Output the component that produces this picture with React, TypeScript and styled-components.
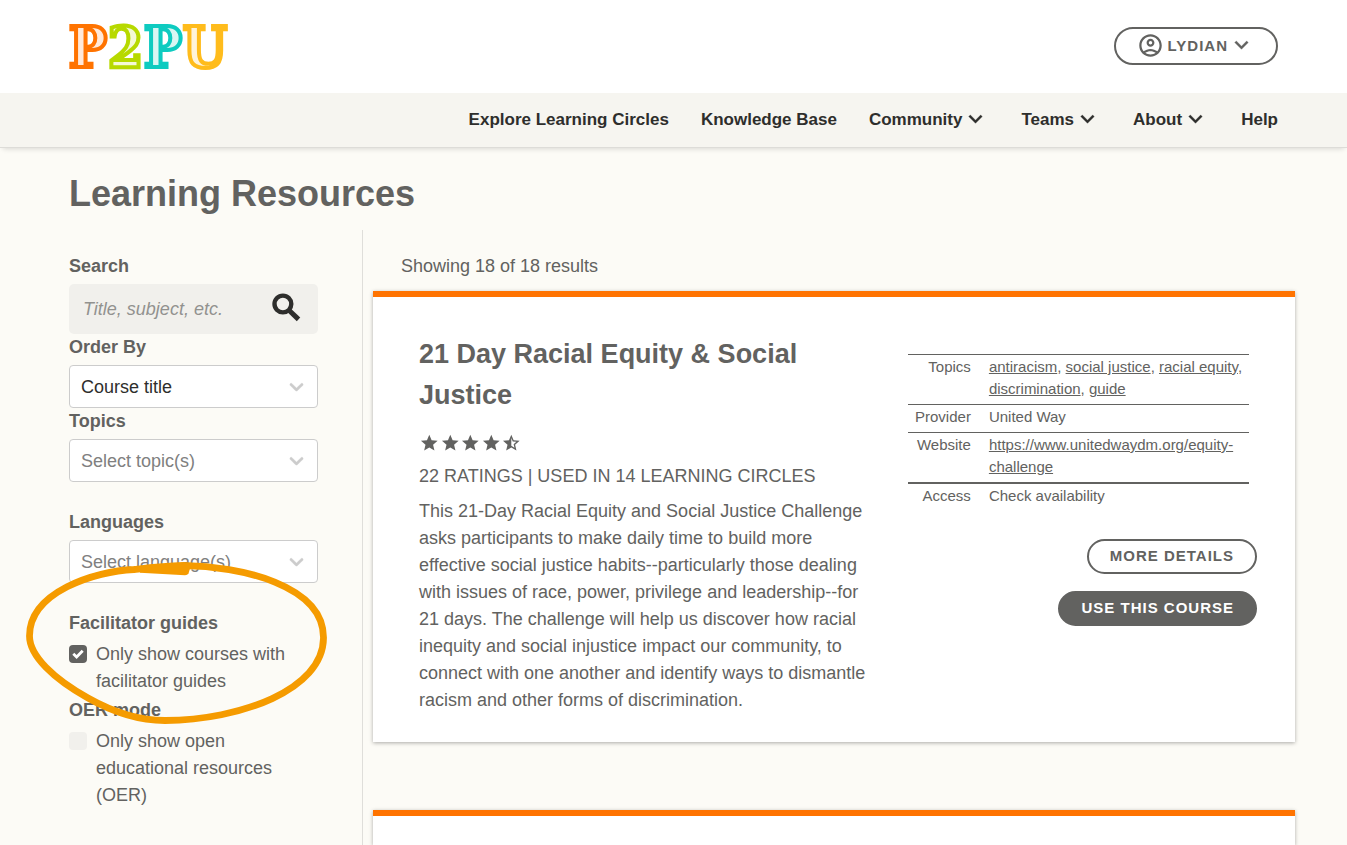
import React from 'react';
import styled, { createGlobalStyle } from 'styled-components';

const GlobalStyle = createGlobalStyle`
  *, *::before, *::after { box-sizing: border-box; }
  body {
    margin: 0;
    background: #fcfbf6;
    color: #626260;
    font-family: 'Liberation Sans', Arial, sans-serif;
    font-size: 18px;
    line-height: 27px;
  }
  button, input, select { font: inherit; color: inherit; }
`;

const Page = styled.div`
  display: flex;
  flex-direction: column;
  min-height: 100vh;
`;

const Header = styled.header`
  display: flex;
  justify-content: space-between;
  align-items: center;
  padding: 19px 69px 20px;
  background: #fff;
`;

const LogoLink = styled.a`
  display: block;
  height: 54px;
`;

const LogoImage = styled.svg`
  overflow: visible;
`;

const LogoText = styled.text`
  font-family: 'DejaVu Serif Condensed', 'DejaVu Serif', serif;
  font-stretch: condensed;
  font-weight: bold;
  font-size: 56px;
  stroke-width: 4px;
`;

const Account = styled.button`
  display: flex;
  align-items: center;
  height: 38px;
  padding: 0 21px 1px;
  border: 2px solid #626260;
  border-radius: 19px;
  background: #fff;
  font-size: 15px;
  font-weight: bold;
  letter-spacing: 1px;
`;

const AccountName = styled.span`
  padding-left: 4px;
`;

const Nav = styled.nav`
  display: flex;
  justify-content: flex-end;
  align-items: center;
  gap: 32px;
  height: 55px;
  padding: 0 69px 2px;
  background: #f6f5f0;
  border-bottom: 1px solid #dddcd8;
  box-shadow: 0 4px 5px -3px rgba(0, 0, 0, 0.14);
  color: #2e2e2c;
  font-size: 17px;
  font-weight: bold;
`;

const NavLink = styled.a`
  color: inherit;
  text-decoration: none;
`;

const NavMenu = styled.button`
  display: flex;
  align-items: center;
  padding: 0;
  border: 0;
  background: none;
`;

const Title = styled.h1`
  margin: 0;
  padding: 19px 69px 9px;
  font-size: 36px;
  line-height: 54px;
`;

const Columns = styled.div`
  display: flex;
  flex: 1;
  padding: 0 52px 0 69px;
`;

const Sidebar = styled.form`
  width: 294px;
  flex: none;
  padding: 23px 44px 36px 0;
  border-right: 1px solid #dfdeda;
`;

const Group = styled.div<{ $after?: number }>`
  position: relative;
  margin-bottom: ${(p) => p.$after ?? 0}px;
`;

const GroupLabel = styled.label`
  display: block;
  margin-bottom: 4px;
  font-weight: bold;
`;

const SearchBox = styled.div`
  display: flex;
  align-items: center;
  height: 50px;
  padding: 0 16px 0 14px;
  border-radius: 5px;
  background: #f1f0ec;
`;

const SearchInput = styled.input`
  flex: 1;
  min-width: 0;
  padding: 0;
  border: 0;
  outline: 0;
  background: none;
  &::placeholder {
    color: #92928f;
    font-style: italic;
    opacity: 1;
  }
`;

const SearchButton = styled.button`
  display: flex;
  padding: 0 0 4px;
  border: 0;
  background: none;
  color: #2e2e2c;
`;

const SelectBox = styled.div`
  display: grid;
  align-items: center;
  > * { grid-area: 1 / 1; }
  > svg {
    justify-self: end;
    margin-right: 10px;
    pointer-events: none;
    color: #ccc;
  }
`;

const Select = styled.select<{ $chosen?: boolean }>`
  width: 100%;
  height: 43px;
  padding: 1px 36px 0 11px;
  appearance: none;
  border: 1px solid #ccc;
  border-radius: 4px;
  background: #fff;
  color: ${(p) => (p.$chosen ? '#2e2e2c' : '#808080')};
`;

const CheckRow = styled.label`
  display: grid;
  grid-template-columns: 18px 1fr;
  column-gap: 9px;
`;

const CheckBox = styled.span`
  display: grid;
  place-items: center;
  width: 18px;
  height: 18px;
  margin-top: 4px;
  > * { grid-area: 1 / 1; }
  > svg { pointer-events: none; }
`;

const CheckInput = styled.input`
  width: 18px;
  height: 18px;
  margin: 0;
  appearance: none;
  border-radius: 4px;
  background: #f1f0ec;
  &:checked { background: #626260; }
`;

const Highlight = styled.svg`
  position: absolute;
  z-index: 1;
  left: -43px;
  top: -49px;
  pointer-events: none;
`;

const Results = styled.main`
  display: flex;
  flex-direction: column;
  flex: 1;
  padding: 23px 0 0 10px;
`;

const Count = styled.p`
  margin: 0 0 11px;
  padding-left: 28px;
`;

const Card = styled.article`
  display: grid;
  grid-template-columns: 9fr 7fr;
  column-gap: 40px;
  margin-bottom: 68px;
  padding: 37px 38px 28px 46px;
  border-top: 6px solid #ff7300;
  background: #fff;
  box-shadow: 0 1px 4px rgba(0, 0, 0, 0.32);
  &:last-child {
    flex: 1;
    margin-bottom: 0;
    padding-top: 0;
    padding-bottom: 0;
  }
`;

const CardTitle = styled.h2`
  margin: 0 0 17px;
  font-size: 27px;
  line-height: 41px;
`;

const Stars = styled.div`
  display: grid;
  grid-template-columns: repeat(5, 1fr);
  width: 103px;
  height: 20px;
  margin-bottom: 10px;
`;

const Text = styled.p`
  margin: 0 0 8px;
  &:last-child { margin-bottom: 0; }
`;

const Details = styled.div`
  display: flex;
  flex-direction: column;
  align-items: flex-end;
  gap: 17px;
  padding-top: 20px;
`;

const Facts = styled.table`
  align-self: stretch;
  margin: 0 8px 11px 0;
  border-spacing: 0;
  font-size: 15px;
  line-height: 22px;
`;

const FactRow = styled.tr<{ $heavy?: boolean }>`
  > * {
    padding: 1px 9px 4px;
    border-top: ${(p) => (p.$heavy ? 2 : 1)}px solid #626260;
    vertical-align: top;
    font-weight: normal;
  }
  > th {
    width: 72px;
    padding-left: 7px;
    text-align: right;
  }
  > td {
    padding-right: 0;
    text-align: left;
  }
`;

const TextLink = styled.a`
  color: inherit;
`;

const Action = styled.button<{ $filled?: boolean }>`
  height: 35px;
  padding: 0 21px 1px;
  border: 2px solid #626260;
  border-radius: 18px;
  background: ${(p) => (p.$filled ? '#626260' : '#fff')};
  color: ${(p) => (p.$filled ? '#fff' : '#626260')};
  font-size: 15px;
  font-weight: bold;
  letter-spacing: 1px;
  line-height: 28px;
`;

const Chevron = () => (
  <svg width="27" height="27" viewBox="0 0 24 24" fill="currentColor" stroke="currentColor" strokeWidth="0.3" aria-hidden="true">
    <path d="M16.59 7.99 12 12.57 7.41 7.99 6 9.4l6 6 6-6z" />
  </svg>
);

const logoLetters = [
  { char: 'P', x: 0, stroke: '#ff7300', fill: '#ffe9da' },
  { char: '2', x: 39, stroke: '#b7d900', fill: '#f4f9d5' },
  { char: 'P', x: 75, stroke: '#0ecbc0', fill: '#d9f6f3' },
  { char: 'U', x: 114, stroke: '#ffbc1c', fill: '#fff3d9' },
];

const Logo = () => (
  <LogoImage width="156" height="54" viewBox="0 0 156 54" role="img" aria-label="P2PU">
    {logoLetters.map((l) => (
      <LogoText key={l.x} x={l.x} y="48" stroke={l.stroke} fill={l.fill}>
        {l.char}
      </LogoText>
    ))}
  </LogoImage>
);

const AccountIcon = () => (
  <svg width="27" height="27" viewBox="0 0 24 24" fill="currentColor" aria-hidden="true">
    <path d="M12 2C6.48 2 2 6.48 2 12s4.48 10 10 10 10-4.48 10-10S17.52 2 12 2zM7.35 18.5C8.66 17.56 10.26 17 12 17s3.34.56 4.65 1.5c-1.31.94-2.91 1.5-4.65 1.5s-3.34-.56-4.65-1.5zm10.79-1.38C16.45 15.8 14.32 15 12 15s-4.45.8-6.14 2.12C4.7 15.73 4 13.95 4 12c0-4.42 3.58-8 8-8s8 3.58 8 8c0 1.95-.7 3.73-1.86 5.12z" />
    <path d="M12 6c-1.93 0-3.5 1.57-3.5 3.5S10.07 13 12 13s3.5-1.57 3.5-3.5S13.93 6 12 6zm0 5c-.83 0-1.5-.67-1.5-1.5S11.17 8 12 8s1.5.67 1.5 1.5S12.83 11 12 11z" />
  </svg>
);

const SearchIcon = () => (
  <svg width="30" height="30" viewBox="0 0 30 30" fill="none" stroke="currentColor" aria-hidden="true">
    <circle cx="10.9" cy="12" r="8.4" strokeWidth="4.4" />
    <path d="M16.5 17.7 26.5 27.4" strokeWidth="5" />
  </svg>
);

const SelectArrow = () => (
  <svg width="23" height="23" viewBox="0 0 20 20" fill="currentColor" stroke="currentColor" strokeWidth="0.3" aria-hidden="true">
    <path d="M4.516 7.548c0.436-0.446 1.043-0.481 1.576 0l3.908 3.747 3.908-3.747c0.533-0.481 1.141-0.446 1.574 0 0.436 0.445 0.408 1.197 0 1.615-0.406 0.418-4.695 4.502-4.695 4.502-0.217 0.223-0.502 0.335-0.787 0.335s-0.57-0.112-0.789-0.335c0 0-4.287-4.084-4.695-4.502s-0.436-1.17 0-1.615z" />
  </svg>
);

const Star = ({ half }: { half?: boolean }) => (
  <svg width="100%" height="20" viewBox="0 0 24 24" fill="currentColor" aria-hidden="true">
    {half ? (
      <path d="M22 9.24l-7.19-.62L12 2 9.19 8.63 2 9.24l5.46 4.73L5.82 21 12 17.27 18.18 21l-1.63-7.03L22 9.24zM12 15.4V6.1l1.71 4.04 4.38.38-3.32 2.88 1 4.28L12 15.4z" />
    ) : (
      <path d="M12 17.27 18.18 21l-1.64-7.03L22 9.24l-7.19-.61L12 2 9.19 8.63 2 9.24l5.46 4.73L5.82 21z" />
    )}
  </svg>
);

const HandDrawnCircle = () => (
  <Highlight width="302" height="164" viewBox="26 561 302 164" aria-hidden="true">
    <path
      d="M183 565.5C165 566 152 567.5 134 569.5C95 571 29.5 592 29.5 636C29.5 656 54 679 88 698C111 711 137 720.5 165 720.5C240 720 323 690 323.5 638C324 585 240 566 183 565.5"
      fill="none"
      stroke="#f59b00"
      strokeWidth="6.8"
      strokeLinejoin="round"
    />
    <path d="M140 566 183 564 190 568.5 188.5 573.5Q187.5 575.3 185 575.3L140 572.8z" fill="#f59b00" />
  </Highlight>
);

type PickerProps = { id: string; label: string; value: string; chosen?: boolean; after?: number };

const Picker = ({ id, label, value, chosen, after }: PickerProps) => (
  <Group $after={after}>
    <GroupLabel htmlFor={id}>{label}</GroupLabel>
    <SelectBox>
      <Select id={id} $chosen={chosen}>
        <option>{value}</option>
      </Select>
      <SelectArrow />
    </SelectBox>
  </Group>
);

type ToggleProps = { label: string; text: string; checked?: boolean; after?: number; children?: React.ReactNode };

const Toggle = ({ label, text, checked, after, children }: ToggleProps) => (
  <Group $after={after}>
    <GroupLabel as="div">{label}</GroupLabel>
    <CheckRow>
      <CheckBox>
        <CheckInput type="checkbox" defaultChecked={checked} />
        {checked && (
          <svg width="12" height="12" viewBox="0 0 12 12" fill="none" stroke="#fff" strokeWidth="2.8" aria-hidden="true">
            <path d="M1.3 5.8 4.6 9 10.7 2.8" />
          </svg>
        )}
      </CheckBox>
      <span>{text}</span>
    </CheckRow>
    {children}
  </Group>
);

const topics = ['antiracism', 'social justice', 'racial equity', 'discrimination', 'guide'];

export default function App() {
  return (
    <Page>
      <GlobalStyle />
      <Header>
        <LogoLink href="#">
          <Logo />
        </LogoLink>
        <Account type="button">
          <AccountIcon />
          <AccountName>LYDIAN</AccountName>
          <Chevron />
        </Account>
      </Header>
      <Nav>
        <NavLink href="#">Explore Learning Circles</NavLink>
        <NavLink href="#">Knowledge Base</NavLink>
        {['Community', 'Teams', 'About'].map((name) => (
          <NavMenu type="button" key={name}>
            {name}
            <Chevron />
          </NavMenu>
        ))}
        <NavLink href="#">Help</NavLink>
      </Nav>
      <Title>Learning Resources</Title>
      <Columns>
        <Sidebar>
          <Group>
            <GroupLabel htmlFor="search">Search</GroupLabel>
            <SearchBox>
              <SearchInput id="search" type="text" placeholder="Title, subject, etc." />
              <SearchButton type="button" aria-label="Search">
                <SearchIcon />
              </SearchButton>
            </SearchBox>
          </Group>
          <Picker id="order" label="Order By" value="Course title" chosen />
          <Picker id="topics" label="Topics" value="Select topic(s)" after={27} />
          <Picker id="languages" label="Languages" value="Select language(s)" after={27} />
          <Toggle label="Facilitator guides" text="Only show courses with facilitator guides" checked after={2}>
            <HandDrawnCircle />
          </Toggle>
          <Toggle label="OER mode" text="Only show open educational resources (OER)" />
        </Sidebar>
        <Results>
          <Count>Showing 18 of 18 results</Count>
          <Card>
            <div>
              <CardTitle>21 Day Racial Equity &amp; Social Justice</CardTitle>
              <Stars role="img" aria-label="4.5 out of 5 stars">
                <Star />
                <Star />
                <Star />
                <Star />
                <Star half />
              </Stars>
              <Text>22 RATINGS | USED IN 14 LEARNING CIRCLES</Text>
              <Text>
                This 21-Day Racial Equity and Social Justice Challenge asks participants to make daily time to build
                more effective social justice habits--particularly those dealing with issues of race, power, privilege
                and leadership--for 21 days. The challenge will help us discover how racial inequity and social
                injustice impact our community, to connect with one another and identify ways to dismantle racism and
                other forms of discrimination.
              </Text>
            </div>
            <Details>
              <Facts>
                <tbody>
                  <FactRow>
                    <th scope="row">Topics</th>
                    <td>
                      {topics.map((topic, i) => (
                        <React.Fragment key={topic}>
                          {i > 0 && ', '}
                          <TextLink href="#">{topic}</TextLink>
                        </React.Fragment>
                      ))}
                    </td>
                  </FactRow>
                  <FactRow>
                    <th scope="row">Provider</th>
                    <td>United Way</td>
                  </FactRow>
                  <FactRow>
                    <th scope="row">Website</th>
                    <td>
                      <TextLink href="#">https://www.unitedwaydm.org/equity-challenge</TextLink>
                    </td>
                  </FactRow>
                  <FactRow $heavy>
                    <th scope="row">Access</th>
                    <td>Check availability</td>
                  </FactRow>
                </tbody>
              </Facts>
              <Action type="button">MORE DETAILS</Action>
              <Action type="button" $filled>
                USE THIS COURSE
              </Action>
            </Details>
          </Card>
          <Card />
        </Results>
      </Columns>
    </Page>
  );
}
